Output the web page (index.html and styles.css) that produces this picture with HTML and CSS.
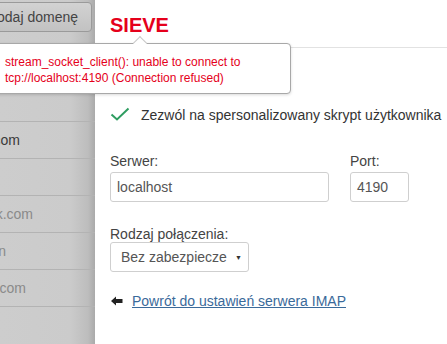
FILE: index.html
```html
<!DOCTYPE html>
<html lang="pl">
<head>
<meta charset="utf-8">
<link rel="stylesheet" href="styles.css">
</head>
<body>
<div class="page">
  <aside class="side">
    <div class="side-top">
      <button class="add-btn">Dodaj domenę</button>
    </div>
    <ul class="domains">
      <li class="row"><span class="dom">domena.pl</span><span class="flag">[]</span></li>
      <li class="row"><span class="dom">gmail.com</span></li>
      <li class="row"><span class="dom dark">example.com</span></li>
      <li class="row"><span class="dom"></span></li>
      <li class="row"><span class="dom">outlook.com</span></li>
      <li class="row"><span class="dom">wp.pln</span></li>
      <li class="row"><span class="dom">yahoo.com</span></li>
    </ul>
  </aside>
  <main class="main">
    <header class="head"><h1 class="title">SIEVE</h1></header>
    <div class="content">
      <div class="check-row">
        <svg class="check" width="20" height="14" viewBox="0 0 20 14"><path d="M1.5 7.5 L7 12.5 L18.5 1.5" fill="none" stroke="#2f9d61" stroke-width="2"/></svg>
        <span>Zezwól na spersonalizowany skrypt użytkownika</span>
      </div>
      <div class="fields">
        <div class="field server">
          <label class="lbl">Serwer:</label>
          <div class="input">localhost</div>
        </div>
        <div class="field port">
          <label class="lbl">Port:</label>
          <div class="input">4190</div>
        </div>
      </div>
      <div class="field conn">
        <label class="lbl">Rodzaj połączenia:</label>
        <div class="select"><span class="sel-text">Bez zabezpieczeń</span><span class="caret">▼</span></div>
      </div>
      <div class="back">
        <svg class="arrow" width="12" height="10" viewBox="0 0 12 10"><path d="M0 5 L5 0.5 L5 3 L11.5 3 L11.5 7 L5 7 L5 9.5 Z" fill="#222"/></svg>
        <a class="back-link" href="#">Powrót do ustawień serwera IMAP</a>
      </div>
    </div>
  </main>
  <div class="tip">
    <div class="tip-arrow"></div>
    <div class="tip-text">stream_socket_client(): unable to connect to<br>tcp://localhost:4190 (Connection refused)</div>
  </div>
</div>
</body>
</html>
```

FILE: styles.css
```css
* { box-sizing: border-box; }
html, body { margin: 0; padding: 0; }
body {
  font-family: "Liberation Sans", Arial, sans-serif;
  color: #333;
  background: #fff;
  width: 447px;
  height: 344px;
  overflow: hidden;
}
.page {
  position: relative;
  display: flex;
  width: 447px;
  height: 344px;
}
.side {
  width: 95px;
  flex: none;
  background: linear-gradient(to right, #cdcdcd 0, #cbcbcb 70px, #bdbdbd 88px, #aaaaaa 95px);
  overflow: hidden;
}
.side-top {
  height: 48px;
  padding-top: 2px;
}
.add-btn {
  display: block;
  margin-left: -30px;
  width: 122px;
  height: 30px;
  border: 1px solid #9a9a9a;
  border-radius: 4px;
  background: linear-gradient(#d2d2d2, #c2c2c2);
  font-family: inherit;
  font-size: 14px;
  color: #444;
  padding: 0 13px 0 0;
  text-align: right;
  white-space: nowrap;
}
.domains {
  list-style: none;
  margin: 0;
  padding: 0;
}
.row {
  height: 37px;
  border-bottom: 1px solid #b3b3b3;
  display: flex;
  align-items: center;
  justify-content: space-between;
  overflow: hidden;
  white-space: nowrap;
  font-size: 14px;
}
.dom {
  color: #8a8a8a;
  display: block;
  overflow: hidden;
  direction: rtl;
  text-align: left;
}
.row:nth-child(1) .dom { width: 10px; }
.row:nth-child(2) .dom { width: 0; }
.row:nth-child(3) .dom { width: 20px; }
.row:nth-child(5) .dom { width: 33px; }
.row:nth-child(6) .dom { width: 6px; }
.row:nth-child(7) .dom { width: 26px; }
.dom.dark { color: #3a3a3a; }
.flag { color: #8a8a8a; padding-right: 6px; font-size: 12px; }

.main {
  flex: 1;
  background: #fff;
}
.head {
  height: 48px;
  border-bottom: 1px solid #e2e2e2;
  padding: 13px 0 0 15px;
}
.title {
  margin: 0;
  font-size: 20px;
  font-weight: bold;
  color: #e5001b;
  line-height: 24px;
}
.content {
  padding: 59px 0 0 15px;
  font-size: 14px;
}
.check-row {
  display: flex;
  align-items: center;
  gap: 11px;
  height: 16px;
  color: #333;
}
.check { flex: none; margin-top: -2px; }
.fields {
  display: flex;
  gap: 21px;
  margin-top: 30px;
}
.field { display: flex; flex-direction: column; }
.lbl {
  font-size: 14px;
  line-height: 16px;
  color: #444;
  margin-bottom: 3px;
}
.input {
  height: 30px;
  border: 1px solid #cfcfcf;
  border-radius: 3px;
  padding: 0 6px;
  display: flex;
  align-items: center;
  font-size: 14px;
  color: #555;
}
.server .input { width: 219px; }
.port .input { width: 59px; }
.conn { margin-top: 24px; }
.conn .lbl { margin-bottom: 0; }
.select {
  width: 139px;
  height: 30px;
  border: 1px solid #cfcfcf;
  border-radius: 3px;
  display: flex;
  align-items: center;
  padding-left: 10px;
  font-size: 14px;
  color: #555;
  overflow: hidden;
}
.sel-text { width: 106px; flex: none; overflow: hidden; white-space: nowrap; }
.caret { font-size: 7px; color: #333; margin-left: 8px; }
.back {
  display: flex;
  align-items: center;
  gap: 9px;
  height: 16px;
  margin-top: 21px;
  padding-left: 1px;
}
.arrow { flex: none; }
.back-link {
  color: #3a6a9a;
  text-decoration: underline;
  font-size: 14px;
}
.tip {
  position: absolute;
  left: -8px;
  top: 43px;
  width: 299px;
  height: 51px;
  background: #fff;
  border: 1px solid #a8a8a8;
  border-radius: 4px;
  box-shadow: 0 1px 3px rgba(0,0,0,0.15);
}
.tip-arrow {
  position: absolute;
  left: 142px;
  top: -6px;
  width: 10px;
  height: 10px;
  background: #fff;
  border-left: 1px solid #c8c8c8;
  border-top: 1px solid #c8c8c8;
  transform: rotate(45deg);
}
.tip-text {
  padding: 10px 0 0 12px;
  font-size: 12px;
  line-height: 16px;
  color: #e5001b;
}
```
